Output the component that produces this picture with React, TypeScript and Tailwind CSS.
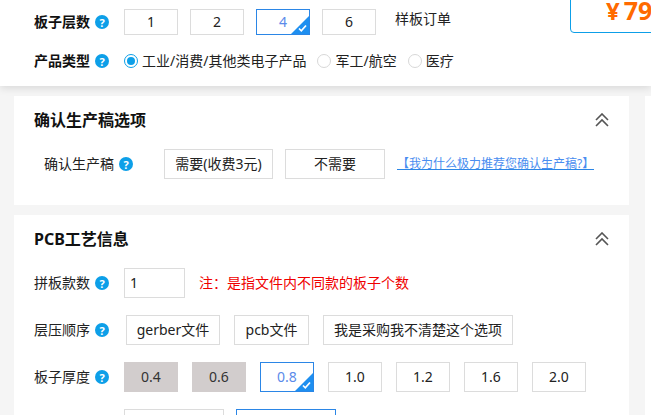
const FONT = "font-['Noto_Sans','Noto_Sans_CJK_SC',sans-serif]";

function Help() {
  return (
    <span className="flex size-[14px] shrink-0 items-center justify-center rounded-full bg-[#0d9fe8] text-[11px] leading-none font-bold text-white">
      ?
    </span>
  );
}

function Check() {
  return (
    <span className="absolute right-0 bottom-0 size-[18px]">
      <svg width="18" height="18" viewBox="0 0 18 18" className="block">
        <path d="M18 0V18H0Z" fill="#1e8ff0" />
        <path d="M8 12.5l2.3 2.3L15 9.5" fill="none" stroke="#fff" strokeWidth="1.7" />
      </svg>
    </span>
  );
}

function Chevrons() {
  return (
    <svg width="14" height="14" viewBox="0 0 14 14" className="block">
      <path d="M1 7l6-6 6 6M1 13l6-6 6 6" fill="none" stroke="#555" strokeWidth="1.6" />
    </svg>
  );
}

function Opt({ label, w, active, off, h = "h-[30px]" }: { label?: string; w: string; active?: boolean; off?: boolean; h?: string }) {
  const tone = active
    ? "border-[#2b86e6] text-[#5b8bea]"
    : off
      ? "border-[#d2cdcd] bg-[#d2cdcd] text-[#333]"
      : "border-[#dcdcdc] text-[#222]";
  return (
    <div className={`relative flex shrink-0 items-center justify-center border text-sm ${h} ${w} ${tone}`}>
      {label}
      {active && <Check />}
    </div>
  );
}

function Radio({ label, on }: { label: string; on?: boolean }) {
  return (
    <div className="flex items-center gap-1">
      <span className={`flex size-[14px] items-center justify-center rounded-full border ${on ? "border-[#0d9fe8]" : "border-[#d8d8d8]"}`}>
        {on && <span className="size-[8px] rounded-full bg-[#0d9fe8]" />}
      </span>
      <span className="text-sm text-[#222]">{label}</span>
    </div>
  );
}

function Label({ text, strong, inset = "pl-[34px] w-[110px]" }: { text: string; strong?: boolean; inset?: string }) {
  return (
    <div className={`flex shrink-0 items-center gap-[5px] text-sm ${inset} ${strong ? "font-bold text-[#111]" : "text-[#222]"}`}>
      <span className="w-[56px] whitespace-nowrap">{text}</span>
      <Help />
    </div>
  );
}

export default function App() {
  return (
    <div className={`relative h-[415px] w-[651px] overflow-hidden bg-[#f5f5f5] ${FONT}`}>
      {/* top bar, stays over the cards */}
      <div className="relative z-10 h-[86px] bg-white pt-[9px] shadow-[0_2px_8px_rgba(0,0,0,0.12)]">
        <div className="flex items-center">
          <Label text="板子层数" strong />
          <div className="ml-[14px] flex gap-3">
            <Opt label="1" w="w-[54px]" h="h-[26px]" />
            <Opt label="2" w="w-[54px]" h="h-[26px]" />
            <Opt label="4" w="w-[54px]" h="h-[26px]" active />
            <Opt label="6" w="w-[54px]" h="h-[26px]" />
          </div>
          <span className="mb-[6px] ml-[19px] text-sm text-[#222]">样板订单</span>
        </div>
        <div className="mt-4 flex items-center">
          <Label text="产品类型" strong />
          <div className="ml-[14px] flex gap-[11px]">
            <Radio label="工业/消费/其他类电子产品" on />
            <Radio label="军工/航空" />
            <Radio label="医疗" />
          </div>
        </div>
        <div className="absolute top-[-6px] left-[570px] flex h-[39px] w-[100px] items-center rounded-b-[4px] border border-[#0d9fe8] pb-[6px] pl-[35px] text-[25px] leading-none font-bold whitespace-nowrap text-[#ff6a00]">
          <span className="text-[24px]">¥</span>
          <span className="ml-[4px]">79</span>
        </div>
      </div>

      <div className="flex gap-4 pt-[10px] pl-[14px]">
        <div className="flex w-[615px] shrink-0 flex-col gap-[10px]">
          <section className="h-[109px] bg-white">
            <div className="flex items-center justify-between pt-[13px] pr-[20px] pl-[20px]">
              <h2 className="text-base leading-[22px] font-bold text-[#111]">确认生产稿选项</h2>
              <Chevrons />
            </div>
            <div className="mt-[18px] flex items-center">
              <div className="flex w-[150px] items-center gap-[5px] pl-[30px] text-sm text-[#222]">
                <span className="whitespace-nowrap">确认生产稿</span>
                <Help />
              </div>
              <div className="flex gap-3">
                <Opt label="需要(收费3元)" w="w-[109px]" />
                <Opt label="不需要" w="w-[100px]" />
              </div>
              <span className="ml-3 border-b border-[#2b86e6] text-xs leading-[11px] whitespace-nowrap text-[#4a8df0]">【我为什么极力推荐您确认生产稿?】</span>
            </div>
          </section>

          <section className="h-[210px] bg-white">
            <div className="flex items-center justify-between pt-[13px] pr-[20px] pl-[20px]">
              <h2 className="text-base leading-[22px] font-bold text-[#111]">PCB工艺信息</h2>
              <Chevrons />
            </div>
            <div className="mt-[18px] flex items-center">
              <Label text="拼板款数" inset="pl-[20px] w-[110px]" />
              <div className="flex h-[30px] w-[61px] items-center border border-[#dcdcdc] pl-[5px] text-sm text-[#222]">1</div>
              <span className="ml-[14px] text-sm text-[#f00000]">注：是指文件内不同款的板子个数</span>
            </div>
            <div className="mt-[17px] flex items-center">
              <Label text="层压顺序" inset="pl-[20px] w-[110px]" />
              <div className="ml-[2px] flex gap-[14px]">
                <Opt label="gerber文件" w="w-[94px]" />
                <Opt label="pcb文件" w="w-[75px]" />
                <Opt label="我是采购我不清楚这个选项" w="w-[190px]" />
              </div>
            </div>
            <div className="mt-[17px] flex items-center">
              <Label text="板子厚度" inset="pl-[20px] w-[110px]" />
              <div className="flex gap-[14px]">
                <Opt label="0.4" w="w-[54px]" off />
                <Opt label="0.6" w="w-[54px]" off />
                <Opt label="0.8" w="w-[54px]" active />
                <Opt label="1.0" w="w-[54px]" />
                <Opt label="1.2" w="w-[54px]" />
                <Opt label="1.6" w="w-[54px]" />
                <Opt label="2.0" w="w-[54px]" />
              </div>
            </div>
            <div className="mt-[17px] ml-[110px] flex gap-3">
              <Opt w="w-[100px]" />
              <div className="h-[30px] w-[100px] shrink-0 border border-[#2b86e6]" />
            </div>
          </section>
        </div>
        <div className="h-[400px] flex-1 bg-white" />
      </div>
    </div>
  );
}
